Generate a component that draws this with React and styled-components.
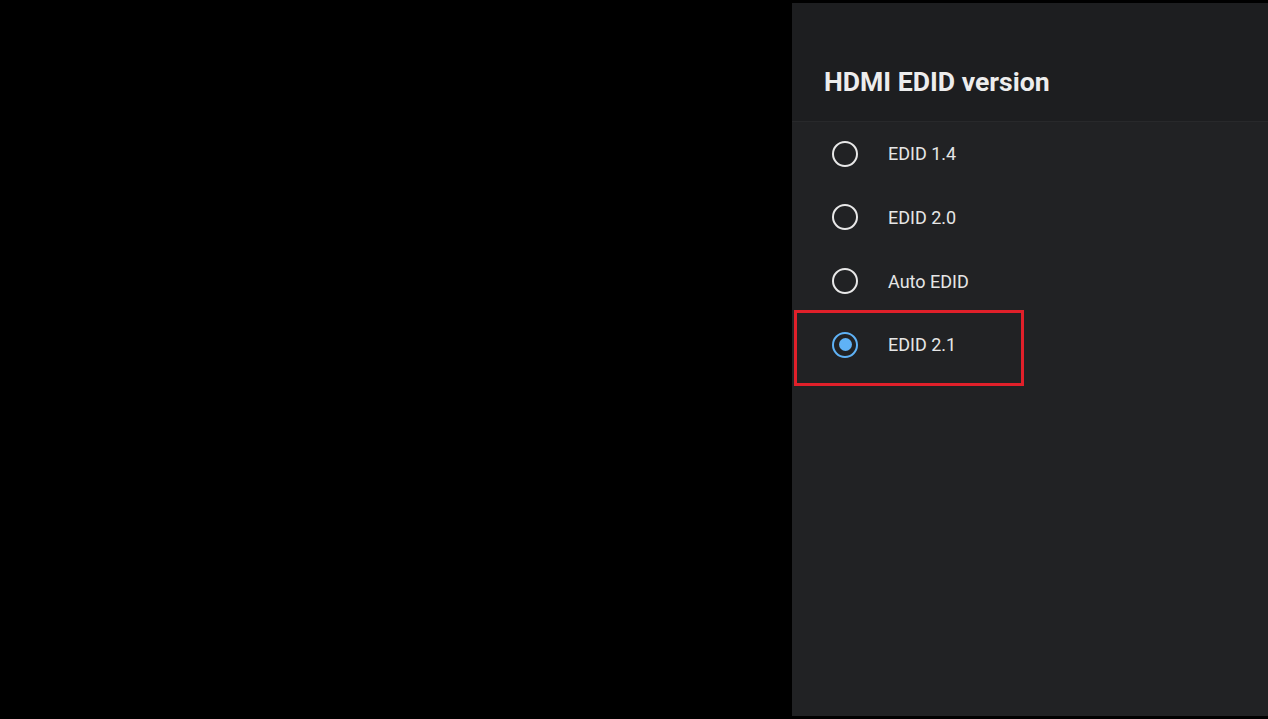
import React from 'react';
import styled, { createGlobalStyle } from 'styled-components';

const GlobalStyle = createGlobalStyle`
	html, body {
		margin: 0;
		padding: 0;
		background: #000000;
	}
	body {
		font-family: Roboto, "Noto Sans", sans-serif;
	}
`;

const Screen = styled.div`
	width: 1268px;
	height: 719px;
	background: #000000;

	display: flex;
	flex-direction: row;
	justify-content: flex-end;
	align-items: flex-start;
	overflow: hidden;
`;

const Panel = styled.div`
	width: 476px;
	height: 713px;
	margin-top: 3px;
	background: #212224;

	display: flex;
	flex-direction: column;
`;

const Header = styled.div`
	box-sizing: border-box;
	height: 119px;
	padding: 63px 0 0 32px;
	background: #1d1e20;
	border-bottom: 1px solid #28292b;

	h1 {
		margin: 0;
		font-size: 26.6px;
		line-height: 32px;
		font-weight: 700;
		color: #ededed;
		letter-spacing: 0;
	}
`;

const List = styled.div`
	display: flex;
	flex-direction: column;
`;

const Row = styled.div`
	position: relative;
	height: 63.67px;
	padding-left: 40px;

	display: flex;
	flex-direction: row;
	align-items: center;
	gap: 30px;

	span {
		font-size: 18px;
		color: #e6e6e6;
	}
`;

const Radio = styled.div`
	box-sizing: border-box;
	width: 26px;
	height: 26px;
	border-radius: 50%;
	border: 2px solid ${p => (p.$checked ? '#5fb2f6' : '#e8e8e8')};

	display: flex;
	align-items: center;
	justify-content: center;

	&::after {
		content: '';
		display: ${p => (p.$checked ? 'block' : 'none')};
		width: 13px;
		height: 13px;
		border-radius: 50%;
		background: #5fb2f6;
	}
`;

const Highlight = styled.div`
	position: absolute;
	left: 2px;
	top: -3px;
	width: 230px;
	height: 76px;
	box-sizing: border-box;
	border: 3px solid #e0202a;
	pointer-events: none;
`;

const options = [
	{ label: 'EDID 1.4' },
	{ label: 'EDID 2.0' },
	{ label: 'Auto EDID' },
	{ label: 'EDID 2.1', checked: true },
];

const App = () => (
	<>
		<GlobalStyle />
		<Screen>
			<Panel>
				<Header>
					<h1>HDMI EDID version</h1>
				</Header>
				<List>
					{options.map(opt => (
						<Row key={opt.label}>
							<Radio $checked={opt.checked} />
							<span>{opt.label}</span>
							{opt.checked && <Highlight />}
						</Row>
					))}
				</List>
			</Panel>
		</Screen>
	</>
);

export default App;
